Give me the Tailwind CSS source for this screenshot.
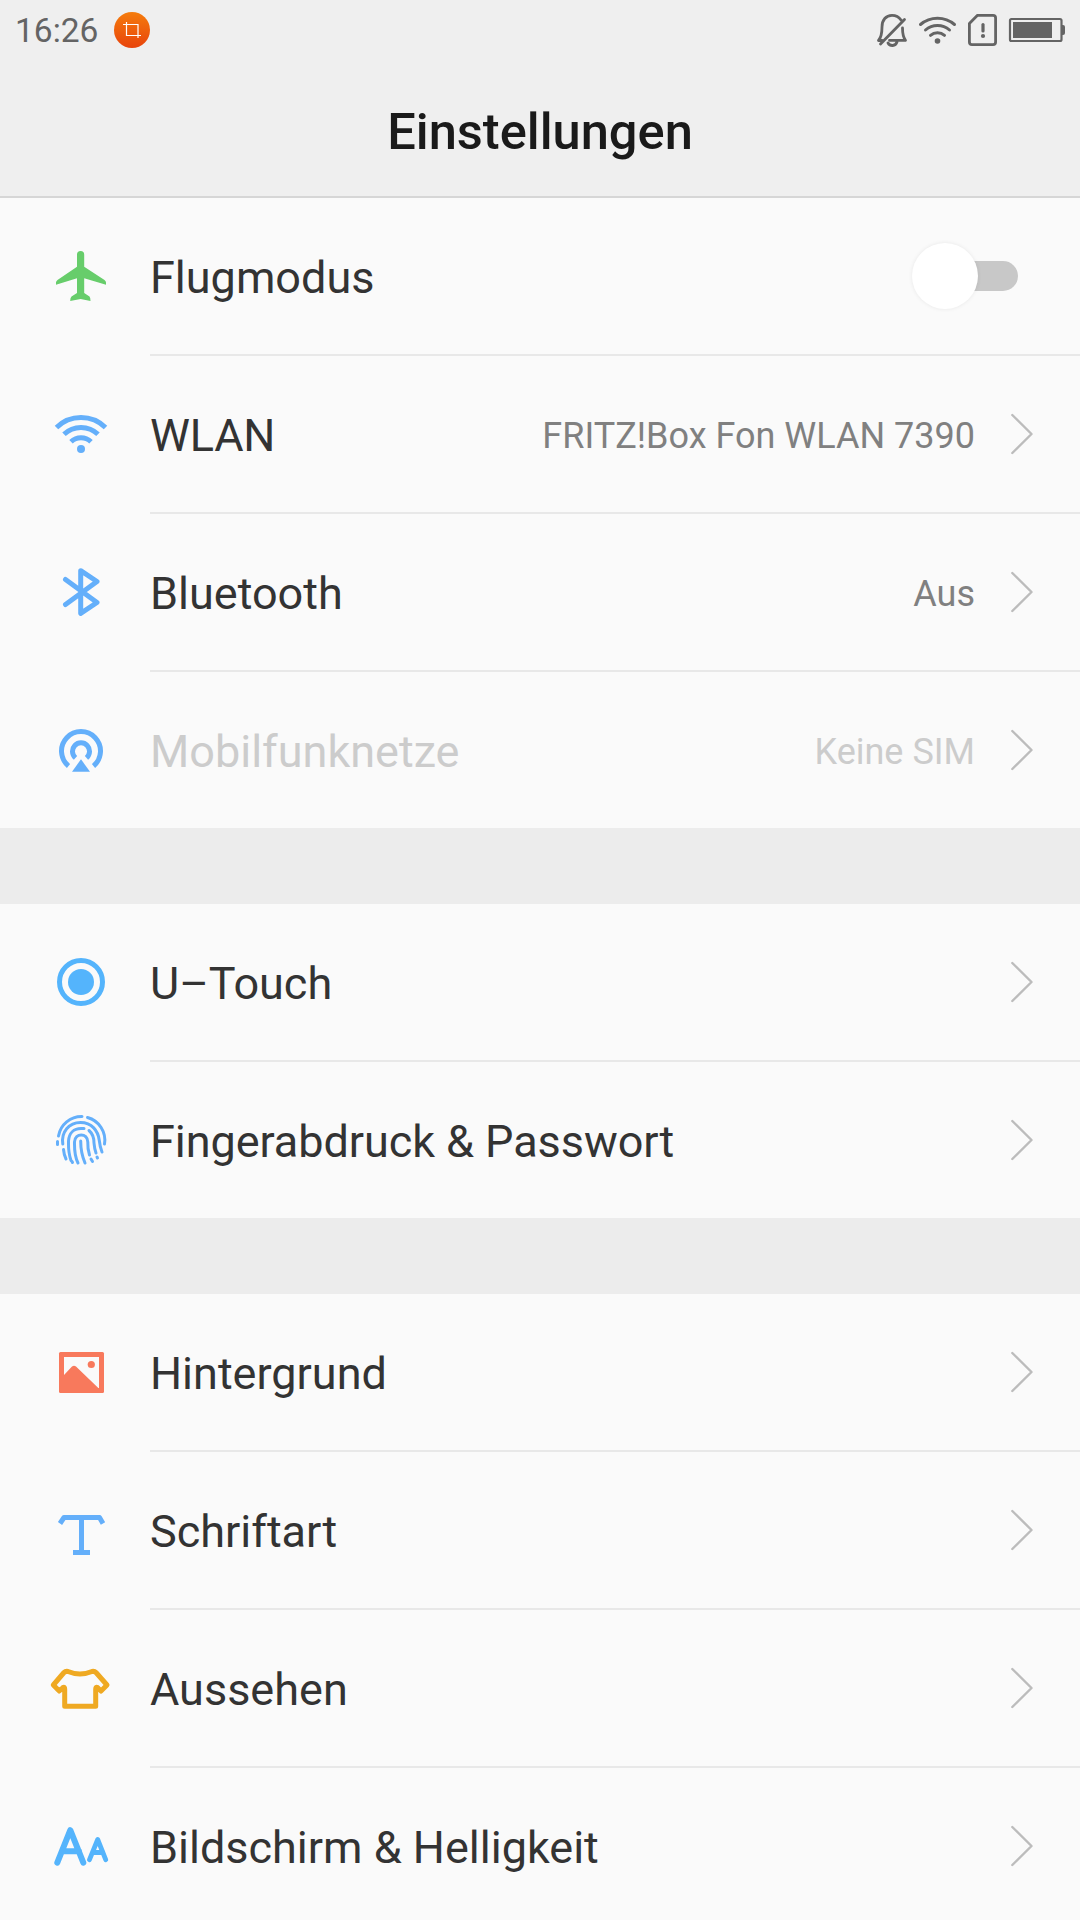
<!DOCTYPE html>
<html lang="de">
<head>
    <meta charset="UTF-8">
    <meta name="viewport" content="width=device-width, initial-scale=1.0">
    <title>Einstellungen</title>
    <script src="https://cdn.jsdelivr.net/npm/@tailwindcss/browser@4"></script>
</head>
<body class="bg-[#ececec] font-[Roboto,sans-serif] text-[#333333] w-[1080px] h-[1920px] overflow-hidden">
    <svg class="hidden">
        <symbol id="chevron" viewBox="0 0 24 44">
            <path d="M2.3 3L21.5 22L2.3 41" fill="none" stroke="#bcbcbc" stroke-width="2.4" stroke-linecap="round" stroke-linejoin="round"/>
        </symbol>
    </svg>

    <!-- Status bar + title -->
    <header class="bg-[#efefef] border-b-2 border-[#d6d6d6] h-[198px]">
        <div class="h-[60px] flex items-center justify-between pl-[15px] pr-[15px] text-[#646464]">
            <div class="flex items-center gap-4">
                <span class="text-[33.5px] leading-[60px] pt-[2px]">16:26</span>
                <svg class="w-9 h-9" viewBox="0 0 36 36">
                    <defs>
                        <linearGradient id="orange" x1="0" y1="0" x2="0" y2="1">
                            <stop offset="0" stop-color="#f57c0c"/>
                            <stop offset="1" stop-color="#e8440c"/>
                        </linearGradient>
                    </defs>
                    <circle cx="18" cy="18" r="18" fill="url(#orange)"/>
                    <path d="M9 12.5H24V26M12.5 10V23.5H27" fill="none" stroke="#fff" stroke-width="1.2"/>
                </svg>
            </div>
            <svg class="w-[190px] h-[60px]" viewBox="875 0 190 60" fill="none" stroke="#646464" stroke-width="2.8" stroke-linecap="round" stroke-linejoin="round">
                <!-- muted bell -->
                <path d="M878.500 40.500C881.500 37 882 33 882 27C882 20 886 15.300 892 15.300C896 15.300 899 17 901 20M902.500 28C902.500 34 903 37 905.500 40.300H889.500M880.500 44L904.500 19.500M888 43C890 46.500 895.500 46.500 897 42M878.500 40.500H882"/>
                <!-- wifi -->
                <path d="M920.500 24.500A26 26 0 0 1 954.500 24.500M925.500 30A18 18 0 0 1 949.500 30M930.500 35.300A10.500 10.500 0 0 1 944.500 35.300" stroke-width="3"/>
                <circle cx="937.500" cy="41" r="2.800" fill="#646464" stroke="none"/>
                <!-- sim -->
                <path d="M977.500 15.300H993Q995.600 15.300 995.600 18V42Q995.600 44.600 993 44.600H972Q969.400 44.600 969.400 42V23.500Z"/>
                <path d="M983 24.500V31" stroke-width="3.200"/>
                <circle cx="983" cy="36" r="2.100" fill="#646464" stroke="none"/>
                <!-- battery -->
                <rect x="1010" y="19" width="51.500" height="22" rx="1.500" stroke-width="2.200"/>
                <rect x="1013" y="22" width="39" height="16" fill="#646464" stroke="none"/>
                <path d="M1062 25H1063Q1065 25 1065 27V33Q1065 35 1063 35H1062Z" fill="#646464" stroke="none"/>
            </svg>
        </div>
        <h1 class="text-center text-[50.6px] leading-[60px] font-medium text-[#1a1a1a] pt-[42px]">Einstellungen</h1>
    </header>

    <main class="flex flex-col gap-[76px]">
        <section class="bg-[#fafafa]">
            <div class="flex pl-[51px]">
                <svg class="w-[60px] h-[60px] mt-12 mr-[39px] shrink-0" viewBox="0 0 60 60" fill="#67cd6b">
                    <path d="M26 8.500Q26 5 29.600 5T33.200 8.500V20.700L53.500 34Q55 35 55 36.500V38.800L33.200 32.300V47L38.500 50.500Q39.500 51.500 39.500 55L29.600 53L19.200 55Q19.200 51.500 20.500 50.500L26 47V32.300L5 38.800V36.500Q5 35 6.500 34L26 20.700Z"/>
                </svg>
                <div class="flex-1 h-[158px] border-b-2 border-[#e8e8e8] flex items-center justify-between pr-[62px]">
                    <span class="text-[45px] leading-none pt-[2px]">Flugmodus</span>
                    <div class="w-[106px] h-[66px] flex items-center relative">
                        <div class="ml-5 flex-1 h-[30px] rounded-full bg-[#c8c8c8]"></div>
                        <div class="absolute left-0 top-0 size-[66px] rounded-full bg-white shadow-[0_0_4px_rgba(0,0,0,0.08)]"></div>
                    </div>
                </div>
            </div>
            <div class="flex pl-[51px]">
                <svg class="w-[60px] h-[60px] mt-12 mr-[39px] shrink-0" viewBox="0 0 60 60" fill="none" stroke="#64affa" stroke-width="5">
                    <path d="M5.500 23.500A35 35 0 0 1 54.500 23.500M13 30.300A24.500 24.500 0 0 1 47 30.300M20 37.700A14.500 14.500 0 0 1 40 37.700"/>
                    <circle cx="30" cy="45" r="4" fill="#64affa" stroke="none"/>
                </svg>
                <div class="flex-1 h-[158px] border-b-2 border-[#e8e8e8] flex items-center pr-[46px]">
                    <span class="text-[45px] leading-none flex-1 pt-[2px] tracking-[-0.2px]">WLAN</span>
                    <span class="text-[36px] leading-none text-[#808080] mr-[35px] pt-[4px]">FRITZ!Box Fon WLAN 7390</span>
                    <svg class="w-6 h-11"><use href="#chevron"/></svg>
                </div>
            </div>
            <div class="flex pl-[51px]">
                <svg class="w-[60px] h-[60px] mt-12 mr-[39px] shrink-0" viewBox="0 0 60 60" fill="none" stroke="#64affa" stroke-width="5" stroke-linecap="round" stroke-linejoin="round">
                    <path d="M14.500 17.500L46 40.500L29.700 51.300V8.700L46 19.500L14.500 42.500"/>
                </svg>
                <div class="flex-1 h-[158px] border-b-2 border-[#e8e8e8] flex items-center pr-[46px]">
                    <span class="text-[45px] leading-none flex-1 pt-[2px]">Bluetooth</span>
                    <span class="text-[36px] leading-none text-[#808080] mr-[35px] pt-[4px]">Aus</span>
                    <svg class="w-6 h-11"><use href="#chevron"/></svg>
                </div>
            </div>
            <div class="flex pl-[51px]">
                <svg class="w-[60px] h-[60px] mt-12 mr-[39px] shrink-0" viewBox="0 0 60 60" fill="none" stroke="#64affa" stroke-width="5">
                    <path d="M17.500 46A19.500 19.500 0 1 1 42.500 46M24.500 37.800A8.500 8.500 0 1 1 35.500 37.800"/>
                    <path d="M30 39.300L39 51.700H21Z" fill="#64affa" stroke="none"/>
                </svg>
                <div class="flex-1 h-[156px] flex items-center pr-[46px]">
                    <span class="text-[45px] leading-none flex-1 text-[#cccccc] pt-[2px]">Mobilfunknetze</span>
                    <span class="text-[36px] leading-none text-[#cccccc] mr-[35px] pt-[4px]">Keine SIM</span>
                    <svg class="w-6 h-11"><use href="#chevron"/></svg>
                </div>
            </div>
        </section>

        <section class="bg-[#fafafa]">
            <div class="flex pl-[51px]">
                <svg class="w-[60px] h-[60px] mt-12 mr-[39px] shrink-0" viewBox="0 0 60 60">
                    <circle cx="30" cy="30" r="21.500" fill="none" stroke="#54b4fc" stroke-width="5"/>
                    <circle cx="30" cy="30" r="13" fill="#54b4fc"/>
                </svg>
                <div class="flex-1 h-[158px] border-b-2 border-[#e8e8e8] flex items-center pr-[46px]">
                    <span class="text-[45px] leading-none flex-1 pt-[2px]">U–Touch</span>
                    <svg class="w-6 h-11"><use href="#chevron"/></svg>
                </div>
            </div>
            <div class="flex pl-[51px]">
                <svg class="w-[60px] h-[60px] mt-12 mr-[39px] shrink-0" viewBox="0 0 60 60" fill="none" stroke="#64affa" stroke-width="3" stroke-linecap="round">
                    <path d="M7.500 26A23.500 23.500 0 0 1 31 6.500M36.500 7.500A23.500 23.500 0 0 1 53.500 34M6.500 31.500V34.500"/>
                    <path d="M11.800 34C10 22 18 12.500 29.500 12.500C41 12.500 47 21 48.200 30Q49 37 51 42M12.500 39.500Q13 45 15 49"/>
                    <path d="M20 50.500C17 42 17.500 36 17.500 31C18 23 23 18.500 30 18.500H33M38 20.500C42 24 43 28 43 33Q43.500 39 45 43"/>
                    <path d="M27 53C23 45 23.500 38 23.500 32C24 22.500 36.500 22.500 36.800 32Q36.500 39 38.500 45M29.700 31C29.700 41 31 46 34 53"/>
                    <path d="M21 51.500L21.500 52.500M40 49L41.500 51.500M46 47L46.500 48"/>
                </svg>
                <div class="flex-1 h-[156px] flex items-center pr-[46px]">
                    <span class="text-[45px] leading-none flex-1 pt-[2px] tracking-[-0.06px]">Fingerabdruck &amp; Passwort</span>
                    <svg class="w-6 h-11"><use href="#chevron"/></svg>
                </div>
            </div>
        </section>

        <section class="bg-[#fafafa]">
            <div class="flex pl-[51px]">
                <svg class="w-[60px] h-[60px] mt-12 mr-[39px] shrink-0" viewBox="0 0 60 60" fill="#f8795c">
                    <rect x="8" y="10" width="45" height="41" rx="1.500"/>
                    <path d="M13 15H48V46H47.300L25 24.500Q23 22.800 21 24.500L13 33Z" fill="#fafafa"/>
                    <circle cx="40.300" cy="22.500" r="3.600"/>
                </svg>
                <div class="flex-1 h-[158px] border-b-2 border-[#e8e8e8] flex items-center pr-[46px]">
                    <span class="text-[45px] leading-none flex-1 pt-[2px]">Hintergrund</span>
                    <svg class="w-6 h-11"><use href="#chevron"/></svg>
                </div>
            </div>
            <div class="flex pl-[51px]">
                <svg class="w-[60px] h-[60px] mt-12 mr-[39px] shrink-0" viewBox="0 0 60 60" fill="none" stroke="#64affa" stroke-width="5" stroke-linejoin="round">
                    <path d="M9 23.500L13 17.500H48.500L52 23.500M30.500 17.500V52.500M22 52.500H39"/>
                </svg>
                <div class="flex-1 h-[158px] border-b-2 border-[#e8e8e8] flex items-center pr-[46px]">
                    <span class="text-[45px] leading-none flex-1 pt-[2px]">Schriftart</span>
                    <svg class="w-6 h-11"><use href="#chevron"/></svg>
                </div>
            </div>
            <div class="flex pl-[51px]">
                <svg class="w-[60px] h-[60px] mt-12 mr-[39px] shrink-0 overflow-visible" viewBox="0 0 60 60" fill="none" stroke="#efa922" stroke-width="5" stroke-linejoin="round">
                    <path d="M17 13.500Q29 18.500 41 13.500Q43.500 13 45 14.500L56 27L50 33L46.500 29.500Q44.700 28.500 44.700 31V48.300H13.700V31Q13.700 28.500 12 29.500L8.300 33L2.300 27L13 14.500Q14.500 13 17 13.500Z"/>
                </svg>
                <div class="flex-1 h-[158px] border-b-2 border-[#e8e8e8] flex items-center pr-[46px]">
                    <span class="text-[45px] leading-none flex-1 pt-[2px]">Aussehen</span>
                    <svg class="w-6 h-11"><use href="#chevron"/></svg>
                </div>
            </div>
            <div class="flex pl-[51px]">
                <svg class="w-[60px] h-[60px] mt-12 mr-[39px] shrink-0" viewBox="0 0 60 60" fill="none" stroke="#54b4fc" stroke-linecap="round" stroke-linejoin="round">
                    <path d="M6.300 46.700L19.300 14.200L32.300 46.700M11 35.200H28" stroke-width="6"/>
                    <path d="M38.500 43.700L46.700 23.500L54.700 43.700M41.500 36.500H52" stroke-width="4.800"/>
                </svg>
                <div class="flex-1 h-[156px] flex items-center pr-[46px]">
                    <span class="text-[45px] leading-none flex-1 pt-[2px]">Bildschirm &amp; Helligkeit</span>
                    <svg class="w-6 h-11"><use href="#chevron"/></svg>
                </div>
            </div>
        </section>
    </main>
</body>
</html>
